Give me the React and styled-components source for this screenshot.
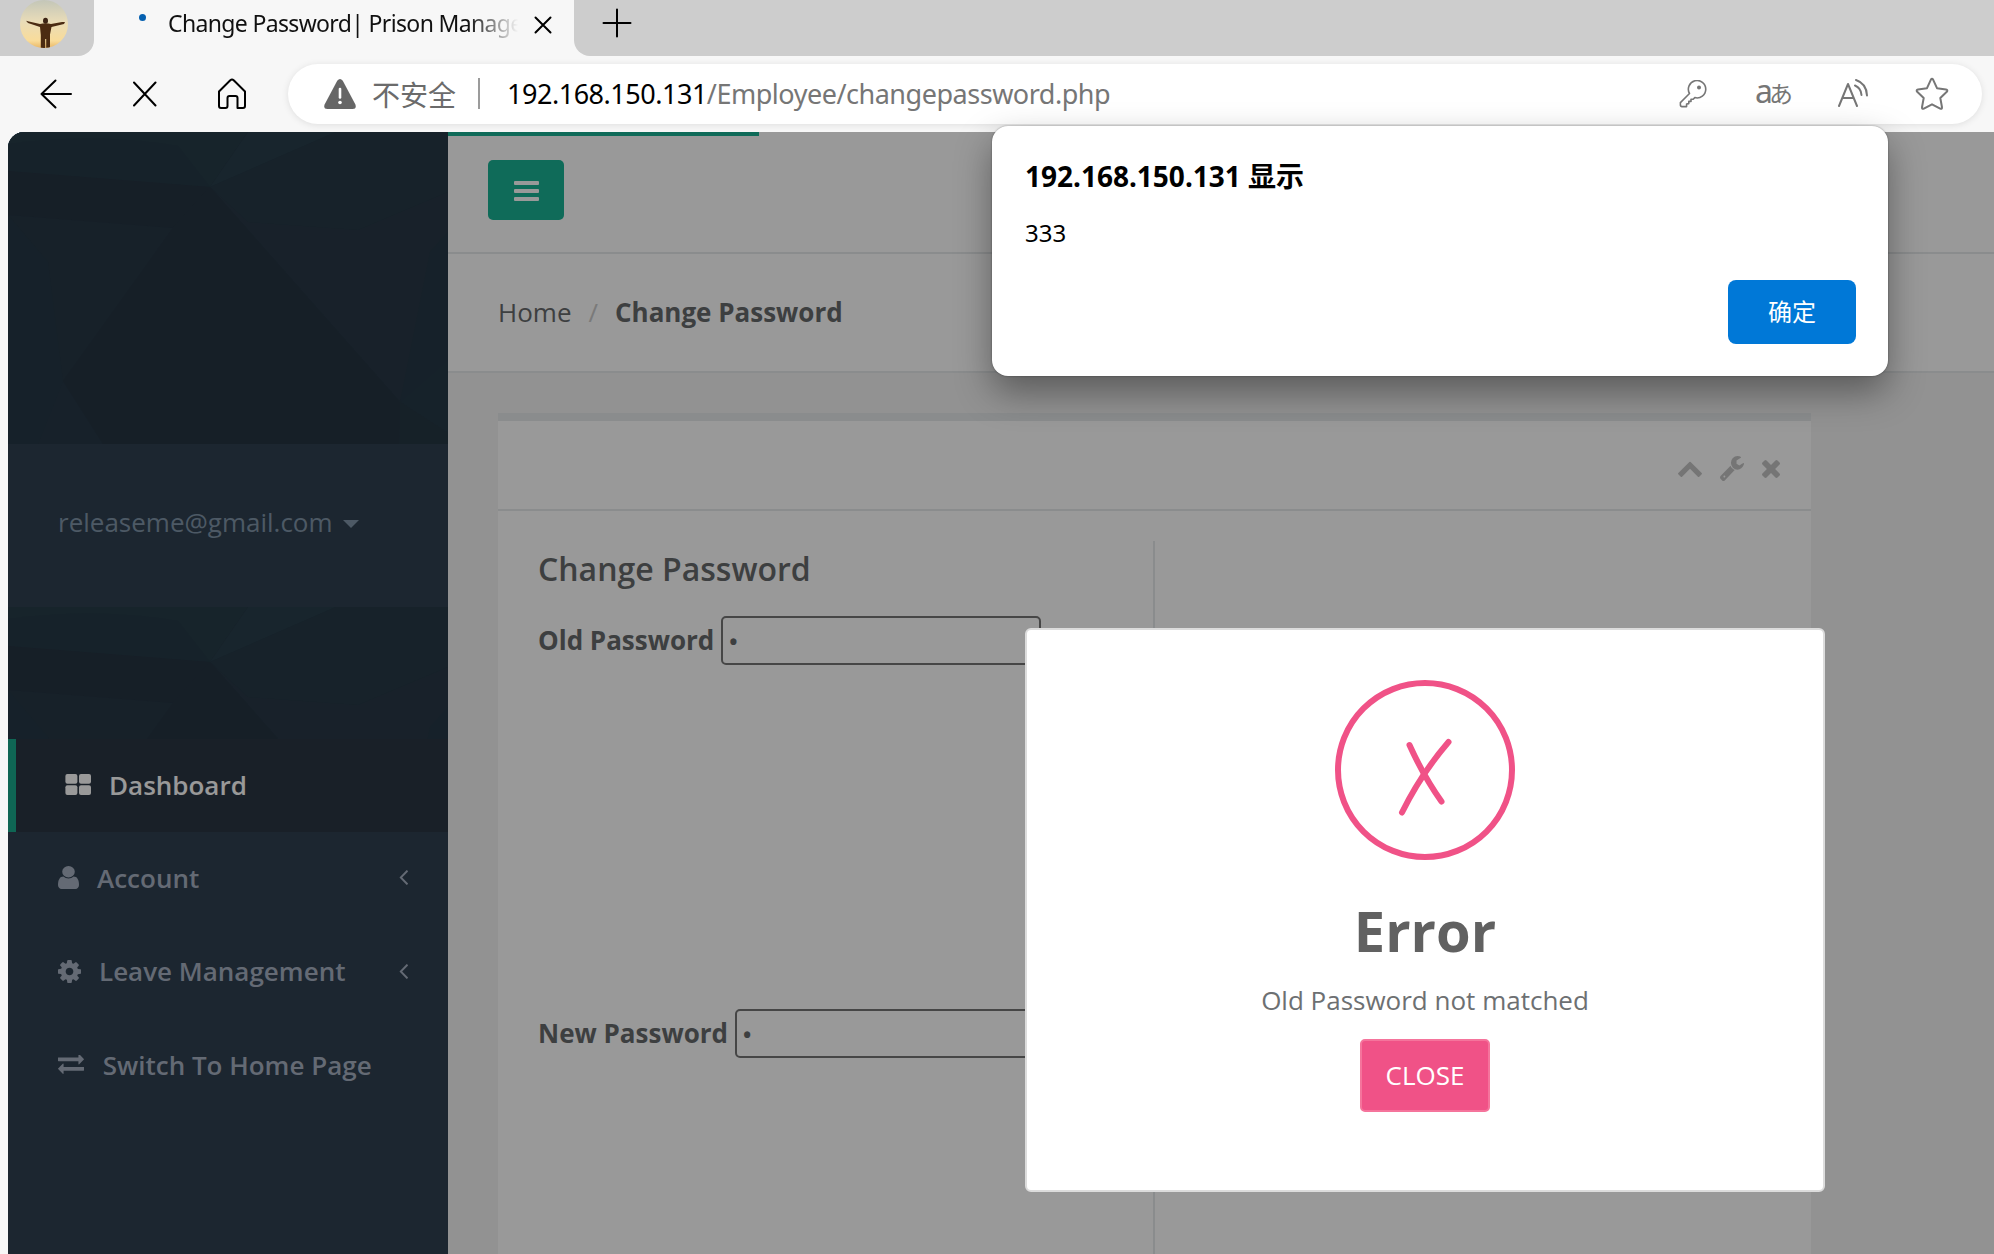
import React from "react";
import styled, { createGlobalStyle, css } from "styled-components";

const GlobalStyle = createGlobalStyle`
  *, *::before, *::after { box-sizing: border-box; }
  html, body { margin: 0; padding: 0; }
  body { width: 1994px; height: 1254px; overflow: hidden; background: #f7f7f7; }
  h2, h3, p { margin: 0; }
  button, input { font: inherit; margin: 0; }
`;

const uiFont = `"Noto Sans", "Open Sans", "Noto Sans CJK SC", sans-serif`;
const pageFont = `"Open Sans", "Noto Sans", sans-serif`;

/* ---------- browser chrome ---------- */

const Browser = styled.div`
  position: relative;
  display: flex;
  flex-direction: column;
  width: 1994px;
  height: 1254px;
  overflow: hidden;
  background: #f7f7f7;
  font-family: ${uiFont};
`;

const TabStrip = styled.div`
  flex: none;
  display: flex;
  height: 56px;
  background: #f7f7f7;
`;

const ProfileArea = styled.div`
  width: 94px;
  padding-left: 20px;
  background: #cdcdcd;
  border-bottom-right-radius: 16px;
`;

const Tab = styled.div`
  display: flex;
  align-items: center;
  width: 480px;
  height: 49px;
  padding-left: 45px;
`;

const LoadingDot = styled.span`
  width: 7px;
  height: 7px;
  margin: -15px 22px 0 0;
  border-radius: 50%;
  background: #0560b0;
`;

const TabTitle = styled.span`
  width: 350px;
  margin-top: -3px;
  white-space: nowrap;
  font-size: 23px;
  line-height: 48px;
  letter-spacing: -0.65px;
  color: #111;
  mask-image: linear-gradient(to right, #000 300px, transparent 350px);
`;

const TabClose = styled.span`
  display: flex;
  margin-left: 16px;
`;

const NewTabArea = styled.div`
  flex: 1;
  padding: 8px 0 0 28px;
  background: #cdcdcd;
  border-bottom-left-radius: 16px;
`;

const Toolbar = styled.div`
  flex: none;
  display: flex;
  align-items: center;
  height: 76px;
  padding: 0 12px 1px 40px;
`;

const NavIcons = styled.div`
  display: flex;
  align-items: center;
  width: 248px;
  gap: 60.5px;
`;

const AddressBar = styled.div`
  flex: 1;
  display: flex;
  align-items: center;
  height: 60px;
  padding: 0 33px 0 36px;
  border-radius: 30px;
  background: #fff;
  box-shadow: 0 1px 7px rgba(0, 0, 0, 0.1);
`;

const Insecure = styled.span`
  margin-left: 16px;
  font-family: "Noto Sans CJK SC", sans-serif;
  font-size: 28px;
  line-height: 40px;
  color: #6b6b6b;
`;

const AddressDivider = styled.span`
  width: 2px;
  height: 31px;
  margin: 0 27px 0 22px;
  background: #9b9b9b;
`;

const Url = styled.span`
  flex: 1;
  font-size: 27px;
  line-height: 40px;
  letter-spacing: -0.48px;
  color: #767676;
`;

const UrlHost = styled.span`
  color: #000;
`;

const AddressActions = styled.div`
  display: flex;
  align-items: center;
`;

const Translate = styled.span`
  display: flex;
  align-items: baseline;
  width: 34px;
  margin: -6px 48px 0 48px;
  line-height: 36px;
  font-size: 32px;
  letter-spacing: -1px;
  color: #767676;
`;

const TranslateKana = styled.span`
  margin-left: -3px;
  font-family: "Noto Sans CJK JP", sans-serif;
  font-size: 24px;
  line-height: 30px;
`;

/* ---------- page ---------- */

const Page = styled.div`
  position: relative;
  flex: 1;
  display: flex;
  margin-left: 8px;
  overflow: hidden;
  border-top-left-radius: 16px;
  background: #f3f3f4;
  font-family: ${pageFont};
  font-size: 26px;
  color: #676a6c;
`;

const Backdrop = styled.div`
  position: absolute;
  inset: 0;
  background: rgba(0, 0, 0, 0.4);
`;

const Sidebar = styled.nav`
  flex: none;
  display: flex;
  flex-direction: column;
  width: 440px;
  background: #2f4050;
`;

const PatternBlock = styled.div`
  height: ${(p) => p.$height}px;
  overflow: hidden;
  background: #263646;
`;

const Profile = styled.div`
  display: flex;
  align-items: center;
  height: 163px;
  padding: 0 0 8px 50px;
  color: #8095a8;
`;

const Caret = styled.span`
  margin: 4px 0 0 10px;
  border-top: 8px solid currentColor;
  border-left: 8px solid transparent;
  border-right: 8px solid transparent;
`;

const MenuItem = styled.div`
  display: flex;
  align-items: center;
  height: 93.3px;
  padding: 0 40px 2px 50px;
  font-weight: 600;
  color: #a7b1c2;
  ${(p) =>
    p.$active &&
    css`
      border-left: 8px solid #19aa8d;
      padding-left: 49px;
      background: #2b3644;
      color: #fff;
    `}
`;

const MenuLabel = styled.span`
  flex: 1;
  margin-left: ${(p) => p.$gap}px;
`;

const Main = styled.main`
  flex: 1;
  display: flex;
  flex-direction: column;
`;

const TopBar = styled.header`
  flex: none;
  height: 122px;
  border-bottom: 2px solid #e7eaec;
  background: #fff;
`;

const Progress = styled.div`
  width: 311px;
  height: 4px;
  margin-bottom: 24px;
  background: #1ab394;
`;

const MenuToggle = styled.button`
  display: flex;
  flex-direction: column;
  align-items: center;
  justify-content: center;
  gap: 4px;
  width: 76px;
  height: 60px;
  margin-left: 40px;
  padding: 2px 0 0;
  border: 0;
  border-radius: 5px;
  background: #1ab394;
`;

const ToggleBar = styled.span`
  width: 25px;
  height: 4px;
  border-radius: 1px;
  background: #fff;
`;

const Breadcrumb = styled.div`
  flex: none;
  display: flex;
  align-items: center;
  height: 119px;
  padding: 0 0 2px 50px;
  border-bottom: 2px solid #e7eaec;
  background: #fff;
`;

const Slash = styled.span`
  width: 10px;
  margin: 0 16.5px 0 17px;
  color: #ccc;
`;

const Current = styled.strong`
  font-weight: 700;
`;

const Box = styled.section`
  flex: 1;
  display: flex;
  flex-direction: column;
  width: 1313px;
  margin: 40px 0 0 50px;
  border-top: 8px solid #e7eaec;
  background: #fff;
`;

const BoxTitle = styled.div`
  flex: none;
  display: flex;
  align-items: center;
  justify-content: flex-end;
  height: 90px;
  padding: 7px 31px 0 0;
  gap: 18px;
  border-bottom: 2px solid #e7eaec;
  color: #c4c4c4;
`;

const BoxContent = styled.div`
  flex: 1;
  display: flex;
  padding: 30px 40px 0;
`;

const FormColumn = styled.div`
  width: 617px;
  border-right: 2px solid #e7eaec;
`;

const FormTitle = styled.h3`
  padding-top: 8px;
  margin-bottom: 27px;
  font-size: 32px;
  line-height: 40px;
  font-weight: 600;
`;

const Field = styled.label`
  display: flex;
  align-items: center;
  height: 49px;
  margin-bottom: 344px;
  font-weight: 700;
`;

const FieldName = styled.span`
  padding-bottom: 2px;
`;

const PasswordInput = styled.input`
  width: 320px;
  height: 49px;
  margin-left: 7px;
  padding: 0 6px;
  border: 2px solid #767676;
  border-radius: 5px;
  outline: 0;
  background: #fff;
  color: #676a6c;
  font-family: ${pageFont};
  font-size: 22px;
`;

/* ---------- dialogs ---------- */

const ErrorModal = styled.div`
  position: absolute;
  left: 1017px;
  top: 496px;
  display: flex;
  flex-direction: column;
  align-items: center;
  width: 800px;
  height: 564px;
  padding-top: 50px;
  border: 2px solid #dcdcdc;
  border-radius: 6px;
  background: #fff;
`;

const ErrorTitle = styled.h2`
  margin-top: 32px;
  font-size: 56px;
  line-height: 76px;
  font-weight: 700;
  color: #616161;
`;

const ErrorText = styled.p`
  margin-top: 15px;
  line-height: 34px;
  color: #6d7072;
`;

const CloseButton = styled.button`
  width: 130px;
  height: 73px;
  margin-top: 22px;
  padding: 0 0 1px;
  border: 2px solid #f5749c;
  border-radius: 5px;
  background: #f05287;
  color: #fff;
`;

const AlertDialog = styled.div`
  position: absolute;
  left: 992px;
  top: 126px;
  display: flex;
  flex-direction: column;
  width: 896px;
  height: 250px;
  padding: 30px 32px 0 33px;
  border-radius: 16px;
  background: #fff;
  box-shadow: 0 0 2px rgba(0, 0, 0, 0.4), 0 16px 36px rgba(0, 0, 0, 0.38);
  color: #000;
`;

const AlertOrigin = styled.h2`
  font-size: 28px;
  line-height: 40px;
  font-weight: 700;
`;

const AlertMessage = styled.p`
  margin-top: 19px;
  font-size: 24px;
  line-height: 36px;
`;

const AlertButton = styled.button`
  align-self: flex-end;
  width: 128px;
  height: 64px;
  margin-top: 29px;
  padding: 0 0 4px;
  border: 0;
  border-radius: 8px;
  background: #0078d7;
  font-family: "Noto Sans CJK SC", sans-serif;
  font-size: 24px;
  color: #fff;
`;

/* ---------- drawings ---------- */

const Icon = ({ w, h, box, d }) => (
  <svg width={w} height={h} viewBox={box} preserveAspectRatio="none" fill="currentColor">
    <path d={d} />
  </svg>
);

const glyphs = {
  user: {
    w: 21, h: 23, box: "256 128 1280 1536",
    d: "M1536 1399q0 109-62.5 187t-150.5 78h-854q-88 0-150.5-78t-62.5-187q0-85 8.5-160.5t31.5-152 58.5-131 94-89 134.5-34.5q131 128 313 128t313-128q76 0 134.5 34.5t94 89 58.5 131 31.5 152 8.5 160.5zm-256-887q0 159-112.5 271.5t-271.5 112.5-271.5-112.5-112.5-271.5 112.5-271.5 271.5-112.5 271.5 112.5 112.5 271.5z",
  },
  cog: {
    w: 23, h: 23, box: "128 128 1536 1536",
    d: "M1152 896q0-106-75-181t-181-75-181 75-75 181 75 181 181 75 181-75 75-181zm512-109v222q0 12-8 23t-20 13l-185 28q-19 54-39 91 35 50 107 138 10 12 10 25t-9 23q-27 37-99 108t-94 71q-12 0-26-9l-138-108q-44 23-91 38-16 136-29 186-7 28-36 28h-222q-14 0-24.5-8.5t-11.5-21.5l-28-184q-49-16-90-37l-141 107q-10 9-25 9-14 0-25-11-126-114-165-168-7-10-7-23 0-12 8-23 15-21 51-66.5t54-70.5q-27-50-41-99l-183-27q-13-2-21-12.5t-8-23.5v-222q0-12 8-23t19-13l186-28q14-46 39-92-40-57-107-138-10-12-10-24 0-10 9-23 26-36 98.5-107.5t94.5-71.5q13 0 26 10l138 107q44-23 91-38 16-136 29-186 7-28 36-28h222q14 0 24.5 8.5t11.5 21.5l28 184q49 16 90 37l142-107q9-9 24-9 13 0 25 10 129 119 165 170 7 8 7 22 0 12-8 23-15 21-51 66.5t-54 70.5q26 50 41 98l183 28q13 2 21 12.5t8 23.5z",
  },
  exchange: {
    w: 26, h: 19, box: "0 352 1792 1280",
    d: "M1792 1184v192q0 13-9.5 22.5t-22.5 9.5h-1376v192q0 13-9.5 22.5t-22.5 9.5q-12 0-24-10l-319-320q-9-9-9-22 0-14 9-23l320-320q9-9 23-9 13 0 22.5 9.5t9.5 22.5v192h1376q13 0 22.5 9.5t9.5 22.5zm0-544q0 14-9 23l-320 320q-9 9-23 9-13 0-22.5-9.5t-9.5-22.5v-192h-1376q-13 0-22.5-9.5t-9.5-22.5v-192q0-13 9.5-22.5t22.5-9.5h1376v-192q0-14 9-23t23-9q12 0 24 10l319 319q9 9 9 23z",
  },
  angleLeft: {
    w: 9, h: 15, box: "581 455 622 1010",
    d: "M1203 544q0 13-10 23l-393 393 393 393q10 10 10 23t-10 23l-50 50q-10 10-23 10t-23-10l-466-466q-10-10-10-23t10-23l466-466q10-10 23-10t23 10l50 50q10 10 10 23z",
  },
  chevronUp: {
    w: 24, h: 16, box: "90 435 1612 1080",
    d: "M1683 1331l-166 165q-19 19-45 19t-45-19l-531-531-531 531q-19 19-45 19t-45-19l-166-165q-19-19-19-45.5t19-45.5l742-741q19-19 45-19t45 19l742 741q19 19 19 45.5t-19 45.5z",
  },
  wrench: {
    w: 24, h: 25, box: "85 128 1641 1643",
    d: "M448 1472q0-26-19-45t-45-19-45 19-19 45 19 45 45 19 45-19 19-45zm644-420l-682 682q-37 37-90 37-52 0-91-37l-106-108q-38-36-38-90 0-53 38-91l681-681q39 98 114.5 173.5t173.5 114.5zm634-435q0 39-23 106-47 134-164.5 217.5t-258.5 83.5q-185 0-316.5-131.5t-131.5-316.5 131.5-316.5 316.5-131.5q58 0 121.5 16.5t107.5 46.5q16 11 16 28t-16 28l-293 169v224l193 107q5-3 79-48.5t135.5-81 70.5-35.5q15 0 23.5 10t8.5 25z",
  },
  times: {
    w: 18, h: 18, box: "302 366 1188 1188",
    d: "M1490 1322q0 40-28 68l-136 136q-28 28-68 28t-68-28l-294-294-294 294q-28 28-68 28t-68-28l-136-136q-28-28-28-68t28-68l294-294-294-294q-28-28-28-68t28-68l136-136q28-28 68-28t68 28l294 294 294-294q28-28 68-28t68 28l136 136q28 28 28 68t-28 68l-294 294 294 294q28 28 28 68z",
  },
};

const ThLarge = () => (
  <svg width="26" height="21" viewBox="0 0 26 21" fill="currentColor">
    <rect x="0.4" y="0" width="12" height="9.7" rx="2" />
    <rect x="14" y="0" width="12" height="9.7" rx="2" />
    <rect x="0.4" y="11.3" width="12" height="9.7" rx="2" />
    <rect x="14" y="11.3" width="12" height="9.7" rx="2" />
  </svg>
);

const Avatar = () => (
  <svg width="48" height="48" viewBox="0 0 48 48">
    <defs>
      <linearGradient id="sky" x1="0" y1="0" x2="0" y2="1">
        <stop offset="0" stopColor="#c3c6b8" />
        <stop offset="0.45" stopColor="#e9dcb8" />
        <stop offset="0.85" stopColor="#f9dc9a" />
        <stop offset="1" stopColor="#e9b765" />
      </linearGradient>
      <clipPath id="round"><circle cx="24" cy="24" r="24" /></clipPath>
    </defs>
    <g clipPath="url(#round)">
      <rect width="48" height="48" fill="url(#sky)" />
      <ellipse cx="25.500" cy="20.800" rx="2.500" ry="3" fill="#3c2415" />
      <path
        d="M6 20.800L9 21.500L20 24Q25.500 22.500 31 24L42 22L45 22L44 24L31.500 27L30 34.500V48H26.200V39H25.200V48H20.800V35L20 27L8 23Z"
        fill="#4b2b12"
      />
    </g>
  </svg>
);

const Stroke = ({ w, h, d, sw = 2, color = "#000", children }) => (
  <svg width={w} height={h} viewBox={`0 0 ${w} ${h}`} fill="none" stroke={color}
    strokeWidth={sw} strokeLinecap="round" strokeLinejoin="round">
    <path d={d} />
    {children}
  </svg>
);

const Warning = () => (
  <svg width="32" height="30" viewBox="0 0 32 30">
    <path d="M13.200 1.800Q16-1.600 18.800 1.800L31.400 25.500Q32.800 30 28.600 30H3.400Q-.8 30 .6 25.500Z" fill="#666" />
    <path d="M16 10V18.500" stroke="#fff" strokeWidth="2.600" strokeLinecap="round" />
    <circle cx="16" cy="23.500" r="1.800" fill="#fff" />
  </svg>
);

const PatternSvg = styled.svg`
  display: block;
`;

const Pattern = () => (
  <PatternSvg width="440" height="312" viewBox="0 0 440 312">
    <rect width="440" height="312" fill="#273746" />
    <path d="M0 0H240L202 55L0 39Z" fill="#273c48" />
    <path d="M0 12Q90 0 170 14L202 55L0 39Z" fill="#263a47" />
    <path d="M240 0H328L202 55Z" fill="#293e4b" />
    <path d="M328 0H440V60L350 98L240 90L202 55Z" fill="#273a47" />
    <path d="M202 55L240 90L350 98L440 60V120L392 270Z" fill="#283846" />
    <path d="M0 39L202 55L165 96L0 83Z" fill="#263442" />
    <path d="M0 83L165 96L55 249L0 249Z" fill="#273745" />
    <path d="M0 83L40 130L55 249L30 312H0Z" fill="#263846" />
    <path d="M202 55L392 270V312H95L55 249L165 96Z" fill="#263542" />
    <path d="M422 120L440 100V228L392 270Z" fill="#263846" />
    <path d="M392 270L440 228V301Z" fill="#263946" />
    <path d="M392 270L440 301V312H391Z" fill="#263744" />
  </PatternSvg>
);

const ErrorMark = () => (
  <svg width="180" height="180" viewBox="0 0 180 180" fill="none" stroke="#f05287" strokeWidth="6" strokeLinecap="round">
    <circle cx="90" cy="90" r="87" />
    <path d="M74.500 65Q89 97 106.500 121.500" />
    <path d="M113.500 62Q86 94 67 132.500" />
  </svg>
);

const Star = () => (
  <svg width="34" height="34" viewBox="0 0 34 34" fill="none" stroke="#767676" strokeWidth="2" strokeLinejoin="round">
    <path d="M15.800 2.800Q17 .8 18.200 2.800L22 11.200L31 12.500Q33.200 13 31.800 14.800L25.300 21L27 30.200Q27.200 32.400 25.200 31.600L17 27.300L8.800 31.600Q6.800 32.400 7 30.200L8.700 21L2.200 14.800Q.8 13 3 12.500L12 11.200Z" />
  </svg>
);

const StarSlot = styled.span`
  display: flex;
  margin-left: 46px;
`;

/* ---------- app ---------- */

const menu = [
  { label: "Account", icon: "user", gap: 18 },
  { label: "Leave Management", icon: "cog", gap: 18 },
  { label: "Switch To Home Page", icon: "exchange", gap: 18.7, leaf: true },
];

export default function App() {
  return (
    <Browser>
      <GlobalStyle />
      <TabStrip>
        <ProfileArea><Avatar /></ProfileArea>
        <Tab>
          <LoadingDot />
          <TabTitle>Change Password| Prison Manage</TabTitle>
          <TabClose><Stroke w={18} h={18} d="M1.500 1.500L16.500 16.500M16.500 1.500L1.500 16.500" /></TabClose>
        </Tab>
        <NewTabArea><Stroke w={30} h={30} d="M15 1.500V28.500M1.500 15H28.500" /></NewTabArea>
      </TabStrip>
      <Toolbar>
        <NavIcons>
          <Stroke w={32} h={30} d="M31 15H1.500M15.500 1.500L1.500 15L15.500 28.500" />
          <Stroke w={24} h={26} d="M1 1.500L22.500 24.500M22.500 1.500L1 24.500" />
          <Stroke w={30} h={32}
            d="M2 13.500L13.300 2.200Q15 .8 16.700 2.200L28 13.500V28Q28 30 26 30H20.500V20Q20.500 18 18.500 18H12.500Q10.500 18 10.500 20V28Q10.500 30 8.500 30H4Q2 30 2 28Z" />
        </NavIcons>
        <AddressBar>
          <Warning />
          <Insecure>不安全</Insecure>
          <AddressDivider />
          <Url><UrlHost>192.168.150.131</UrlHost>/Employee/changepassword.php</Url>
          <AddressActions>
            <Stroke w={28} h={28} color="#767676" sw={1.6}
              d="M10.500 13.500A8.700 8.700 0 1 1 15.800 17.600L14.200 19.200H12V21.400H9.800V23.600L7.600 24V26.600H3Q1.400 26.600 1.400 25V22.600Z">
              <circle cx="20" cy="7.500" r="1.200" fill="#767676" />
            </Stroke>
            <Translate>a<TranslateKana>あ</TranslateKana></Translate>
            <Stroke w={32} h={30} color="#767676"
              d="M2 27L11 5L20 27M5.500 19H16.500M18 6.500Q24 9 24.500 16M19 1Q29.500 4.500 30 16.500" />
            <StarSlot><Star /></StarSlot>
          </AddressActions>
        </AddressBar>
      </Toolbar>

      <Page>
        <Sidebar>
          <PatternBlock $height={312}><Pattern /></PatternBlock>
          <Profile>releaseme@gmail.com<Caret /></Profile>
          <PatternBlock $height={132}><Pattern /></PatternBlock>
          <MenuItem $active>
            <ThLarge />
            <MenuLabel $gap={18}>Dashboard</MenuLabel>
          </MenuItem>
          {menu.map((m) => (
            <MenuItem key={m.label}>
              <Icon {...glyphs[m.icon]} />
              <MenuLabel $gap={m.gap}>{m.label}</MenuLabel>
              {!m.leaf && <Icon {...glyphs.angleLeft} />}
            </MenuItem>
          ))}
        </Sidebar>
        <Main>
          <TopBar>
            <Progress />
            <MenuToggle><ToggleBar /><ToggleBar /><ToggleBar /></MenuToggle>
          </TopBar>
          <Breadcrumb>
            <span>Home</span>
            <Slash>/</Slash>
            <Current>Change Password</Current>
          </Breadcrumb>
          <Box>
            <BoxTitle>
              <Icon {...glyphs.chevronUp} />
              <Icon {...glyphs.wrench} />
              <Icon {...glyphs.times} />
            </BoxTitle>
            <BoxContent>
              <FormColumn>
                <FormTitle>Change Password</FormTitle>
                <Field><FieldName>Old Password</FieldName><PasswordInput type="password" defaultValue="1" /></Field>
                <Field><FieldName>New Password</FieldName><PasswordInput type="password" defaultValue="1" /></Field>
              </FormColumn>
            </BoxContent>
          </Box>
        </Main>
        <Backdrop />
        <ErrorModal>
          <ErrorMark />
          <ErrorTitle>Error</ErrorTitle>
          <ErrorText>Old Password not matched</ErrorText>
          <CloseButton>CLOSE</CloseButton>
        </ErrorModal>
      </Page>

      <AlertDialog>
        <AlertOrigin>192.168.150.131 显示</AlertOrigin>
        <AlertMessage>333</AlertMessage>
        <AlertButton>确定</AlertButton>
      </AlertDialog>
    </Browser>
  );
}
